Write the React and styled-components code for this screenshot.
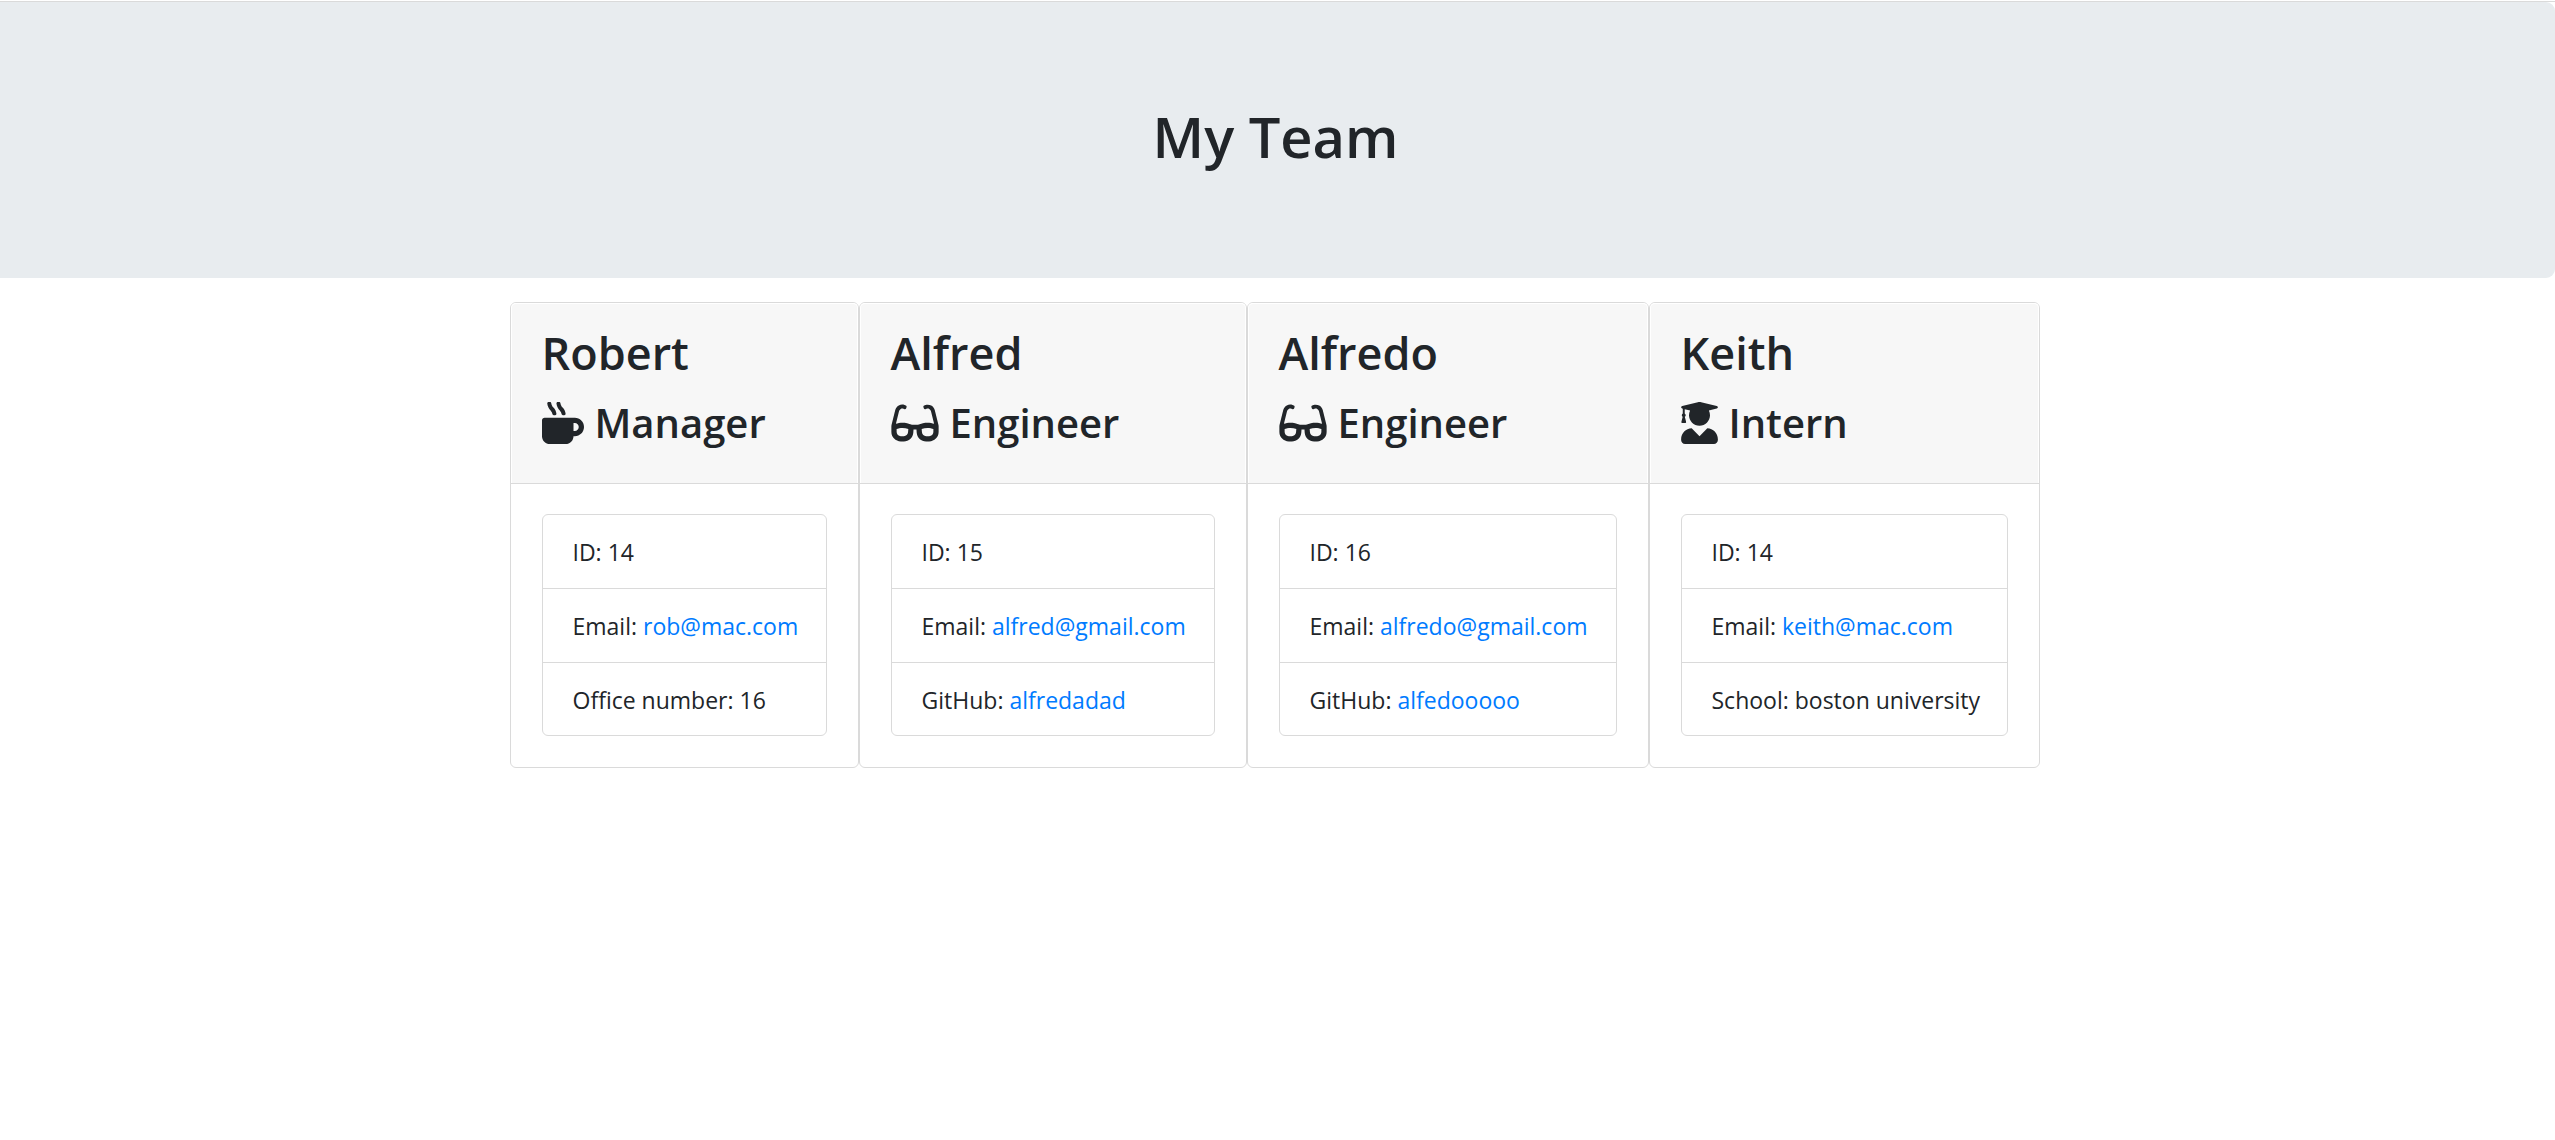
import React from "react";
import styled, { createGlobalStyle } from "styled-components";
import { FaMugHot, FaGlasses, FaUserGraduate } from "react-icons/fa";

const GlobalStyle = createGlobalStyle`
  *, *::before, *::after { box-sizing: border-box; }
  body {
    margin: 0;
    background: #fff;
    color: #212529;
    font-family: "Segoe UI", "Open Sans", "Noto Sans", sans-serif;
    font-size: 23px;
    line-height: 37px;
  }
`;

const Page = styled.div`
  border-top: 1px solid #fff;
`;

const TopRule = styled.div`
  border-top: 1px solid #dadada;
`;

const Banner = styled.header`
  padding: 98px 52px 94px 48px;
  border-radius: 0 9px 9px 0;
  background: #e8ecef;
  text-align: center;
`;

const Title = styled.h1`
  margin: 0 0 12px;
  font-size: 56px;
  font-weight: 600;
  line-height: 72px;
`;

const Team = styled.main`
  display: flex;
  justify-content: center;
  margin-top: 24px;
  padding-right: 6px;
`;

const Card = styled.article`
  flex: 0 1 ${(p) => p.$width}px;
  border: 1px solid #dadada;
  border-radius: 6px;
  background: #fff;
`;

const CardHeader = styled.div`
  padding: 20px 30px 18px;
  border: solid #fff;
  border-width: 1px 1px 0;
  border-radius: 5px 5px 0 0;
  background: #f7f7f7;
  box-shadow: 0 1px 0 #dadada;
`;

const Name = styled.h2`
  margin: 0 0 10px;
  font-size: 45px;
  font-weight: 600;
  line-height: 58px;
`;

const Role = styled.h3`
  display: flex;
  align-items: center;
  gap: 11px;
  margin: 0 0 11px;
  font-size: 40px;
  font-weight: 600;
  line-height: 62px;
`;

const RoleIcon = styled.span`
  display: flex;
  flex: none;
  width: ${(p) => p.$width}px;

  svg {
    width: 100%;
    height: 42px;
  }
`;

const CardBody = styled.div`
  padding: 31px;
`;

const Details = styled.ul`
  margin: 0;
  padding: 0;
  border: 1px solid #dadada;
  border-radius: 6px;
  list-style: none;
`;

const Detail = styled.li`
  padding: 19px 24px 17px 30px;
  white-space: nowrap;

  & + & {
    border-top: 1px solid #dadada;
  }

  &:last-child {
    padding-bottom: 16px;
  }
`;

const Link = styled.a`
  color: #007bff;
  text-decoration: none;
`;

const icons = {
  Manager: { Icon: FaMugHot, width: 42 },
  Engineer: { Icon: FaGlasses, width: 48 },
  Intern: { Icon: FaUserGraduate, width: 37 },
};

const members = [
  { name: "Robert", role: "Manager", id: 14, email: "rob@mac.com", label: "Office number", value: "16", width: 349 },
  { name: "Alfred", role: "Engineer", id: 15, email: "alfred@gmail.com", label: "GitHub", value: "alfredadad", github: true, width: 388 },
  { name: "Alfredo", role: "Engineer", id: 16, email: "alfredo@gmail.com", label: "GitHub", value: "alfedooooo", github: true, width: 402 },
  { name: "Keith", role: "Intern", id: 14, email: "keith@mac.com", label: "School", value: "boston university", width: 391 },
];

function MemberCard({ member }) {
  const { Icon, width } = icons[member.role];
  return (
    <Card $width={member.width}>
      <CardHeader>
        <Name>{member.name}</Name>
        <Role>
          <RoleIcon $width={width}>
            <Icon aria-hidden="true" />
          </RoleIcon>
          {member.role}
        </Role>
      </CardHeader>
      <CardBody>
        <Details>
          <Detail>ID: {member.id}</Detail>
          <Detail>
            Email: <Link href={`mailto:${member.email}`}>{member.email}</Link>
          </Detail>
          <Detail>
            {member.label}:{" "}
            {member.github ? (
              <Link href={`https://github.com/${member.value}`}>{member.value}</Link>
            ) : (
              member.value
            )}
          </Detail>
        </Details>
      </CardBody>
    </Card>
  );
}

export default function App() {
  return (
    <Page>
      <GlobalStyle />
      <TopRule />
      <Banner>
        <Title>My Team</Title>
      </Banner>
      <Team>
        {members.map((member) => (
          <MemberCard key={member.name} member={member} />
        ))}
      </Team>
    </Page>
  );
}
